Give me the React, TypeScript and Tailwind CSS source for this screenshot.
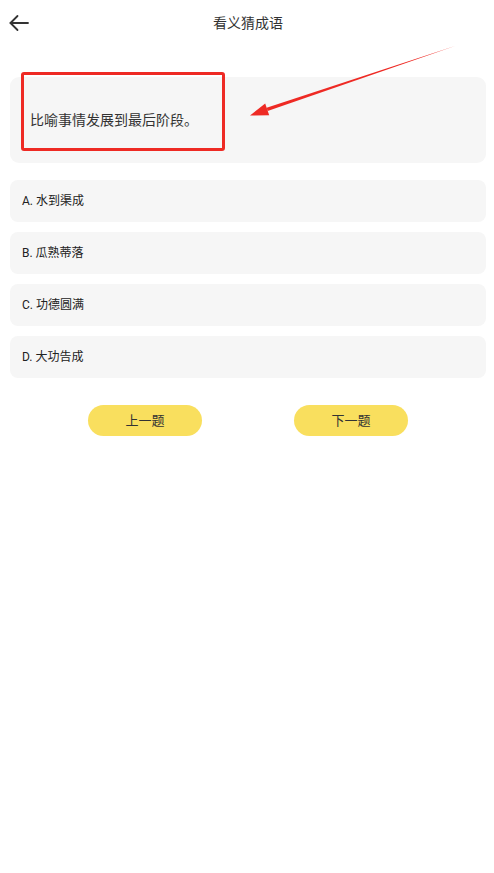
const options = ["A. 水到渠成", "B. 瓜熟蒂落", "C. 功德圆满", "D. 大功告成"];

export default function App() {
  return (
    <div
      className="relative min-h-screen bg-white text-[#333]"
      style={{ fontFamily: 'Roboto, "Noto Sans CJK SC", sans-serif' }}
    >
      <header className="relative flex h-[46px] items-center justify-center">
        <button className="absolute left-[8px] top-[13px] text-[#333]">
          <svg width="22" height="20" viewBox="0 0 22 20" fill="none" stroke="currentColor" strokeWidth="1.8" strokeLinecap="round" strokeLinejoin="round">
            <path d="M20 10H2.5" />
            <path d="M9.5 3L2.5 10L9.5 17" />
          </svg>
        </button>
        <h1 className="pl-[2px] text-[14px] text-[#333]">看义猜成语</h1>
      </header>

      <main className="pl-[10px] pr-[8px] pt-[31px]">
        <div className="relative flex h-[86px] items-center rounded-[9px] bg-[#f6f6f6] px-[20px]">
          <p className="text-[14px] text-[#333]">比喻事情发展到最后阶段。</p>
          <div className="absolute left-[11px] top-[-5px] h-[79px] w-[204px] rounded-[3px] border-[3px] border-[#ee2a24]" />
        </div>

        <div className="mt-[17px] flex flex-col gap-[10px]">
          {options.map((o) => (
            <div key={o} className="flex h-[42px] items-center rounded-[8px] bg-[#f6f6f6] px-[12px] text-[12px] text-[#222]">
              {o}
            </div>
          ))}
        </div>

        <div className="mt-[27px] flex justify-center gap-[92px]">
          <button className="h-[31px] w-[114px] rounded-full bg-[#f9df5e] text-[13px] text-[#333]">上一题</button>
          <button className="h-[31px] w-[114px] rounded-full bg-[#f9df5e] text-[13px] text-[#333]">下一题</button>
        </div>
      </main>

      <svg className="pointer-events-none absolute left-0 top-0" width="494" height="200" viewBox="0 0 494 200">
        <polygon points="455,46 267.6,110.9 266.6,107.7" fill="#ee2a24" />
        <polygon points="250,115.5 269.2,115.2 265.2,103.4" fill="#ee2a24" />
      </svg>
    </div>
  );
}
